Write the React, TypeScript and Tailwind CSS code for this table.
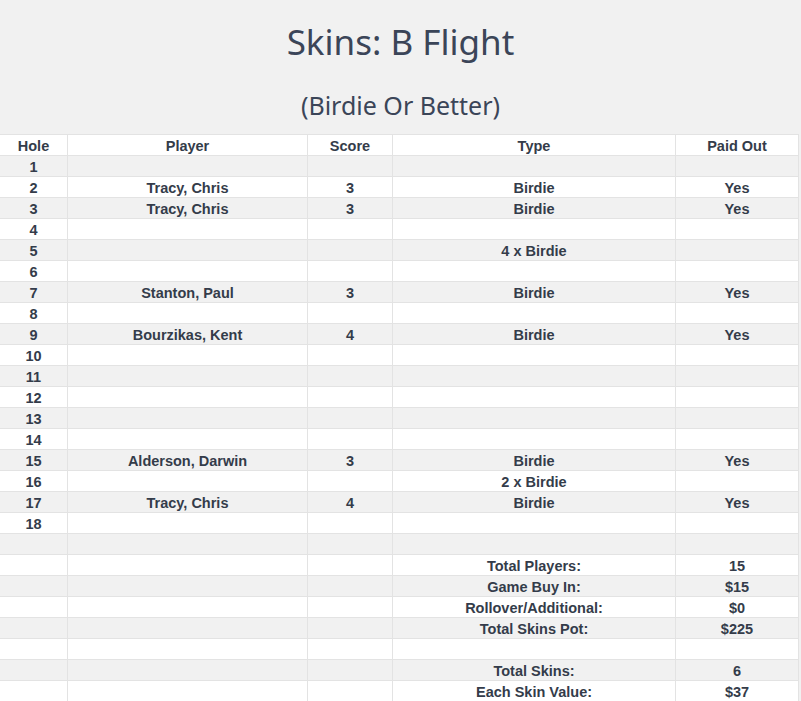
type Row = {
  hole: string;
  player?: string;
  score?: string;
  type?: string;
  paid?: string;
};

const holes: Row[] = [
  { hole: '1' },
  { hole: '2', player: 'Tracy, Chris', score: '3', type: 'Birdie', paid: 'Yes' },
  { hole: '3', player: 'Tracy, Chris', score: '3', type: 'Birdie', paid: 'Yes' },
  { hole: '4' },
  { hole: '5', type: '4 x Birdie' },
  { hole: '6' },
  { hole: '7', player: 'Stanton, Paul', score: '3', type: 'Birdie', paid: 'Yes' },
  { hole: '8' },
  { hole: '9', player: 'Bourzikas, Kent', score: '4', type: 'Birdie', paid: 'Yes' },
  { hole: '10' },
  { hole: '11' },
  { hole: '12' },
  { hole: '13' },
  { hole: '14' },
  { hole: '15', player: 'Alderson, Darwin', score: '3', type: 'Birdie', paid: 'Yes' },
  { hole: '16', type: '2 x Birdie' },
  { hole: '17', player: 'Tracy, Chris', score: '4', type: 'Birdie', paid: 'Yes' },
  { hole: '18' },
  { hole: '' },
  { hole: '', type: 'Total Players:', paid: '15' },
  { hole: '', type: 'Game Buy In:', paid: '$15' },
  { hole: '', type: 'Rollover/Additional:', paid: '$0' },
  { hole: '', type: 'Total Skins Pot:', paid: '$225' },
  { hole: '' },
  { hole: '', type: 'Total Skins:', paid: '6' },
  { hole: '', type: 'Each Skin Value:', paid: '$37' },
];

const cell = 'h-[21px] pt-[2px] border-r border-b border-[#e3e3e3] flex items-center justify-center leading-none';

const TableRow = ({ row, striped }: { row: Row; striped: boolean }) => {
  const bg = striped ? 'bg-[#f1f1f1]' : 'bg-white';
  return (
    <div className={`grid grid-cols-[68px_240px_85px_283px_123px] ${bg}`}>
      <div className={cell}>{row.hole}</div>
      <div className={cell}>{row.player}</div>
      <div className={cell}>{row.score}</div>
      <div className={cell}>{row.type}</div>
      <div className={cell}>{row.paid}</div>
    </div>
  );
};

export default function App() {
  return (
    <div className="min-h-[701px] w-[801px] bg-[#f1f1f1] text-[#3b4558]">
      <div className="h-[134px] flex flex-col items-center" style={{ fontFamily: '"Noto Sans", sans-serif' }}>
        <h1 className="mt-[20px] h-[44px] leading-[44px] text-[35px] font-normal">Skins: B Flight</h1>
        <h2 className="mt-[25px] h-[32px] leading-[32px] text-[25px] font-normal">(Birdie Or Better)</h2>
      </div>
      <div
        className="w-[799px] border-t border-[#e3e3e3] text-[14.5px] font-bold text-[#343c4a]"
        style={{ fontFamily: '"Liberation Sans", Arial, sans-serif' }}
      >
        <div className="grid grid-cols-[68px_240px_85px_283px_123px] bg-white">
          <div className={cell}>Hole</div>
          <div className={cell}>Player</div>
          <div className={cell}>Score</div>
          <div className={cell}>Type</div>
          <div className={cell}>Paid Out</div>
        </div>
        {holes.map((r, i) => (
          <TableRow key={i} row={r} striped={i % 2 === 0} />
        ))}
      </div>
    </div>
  );
}
